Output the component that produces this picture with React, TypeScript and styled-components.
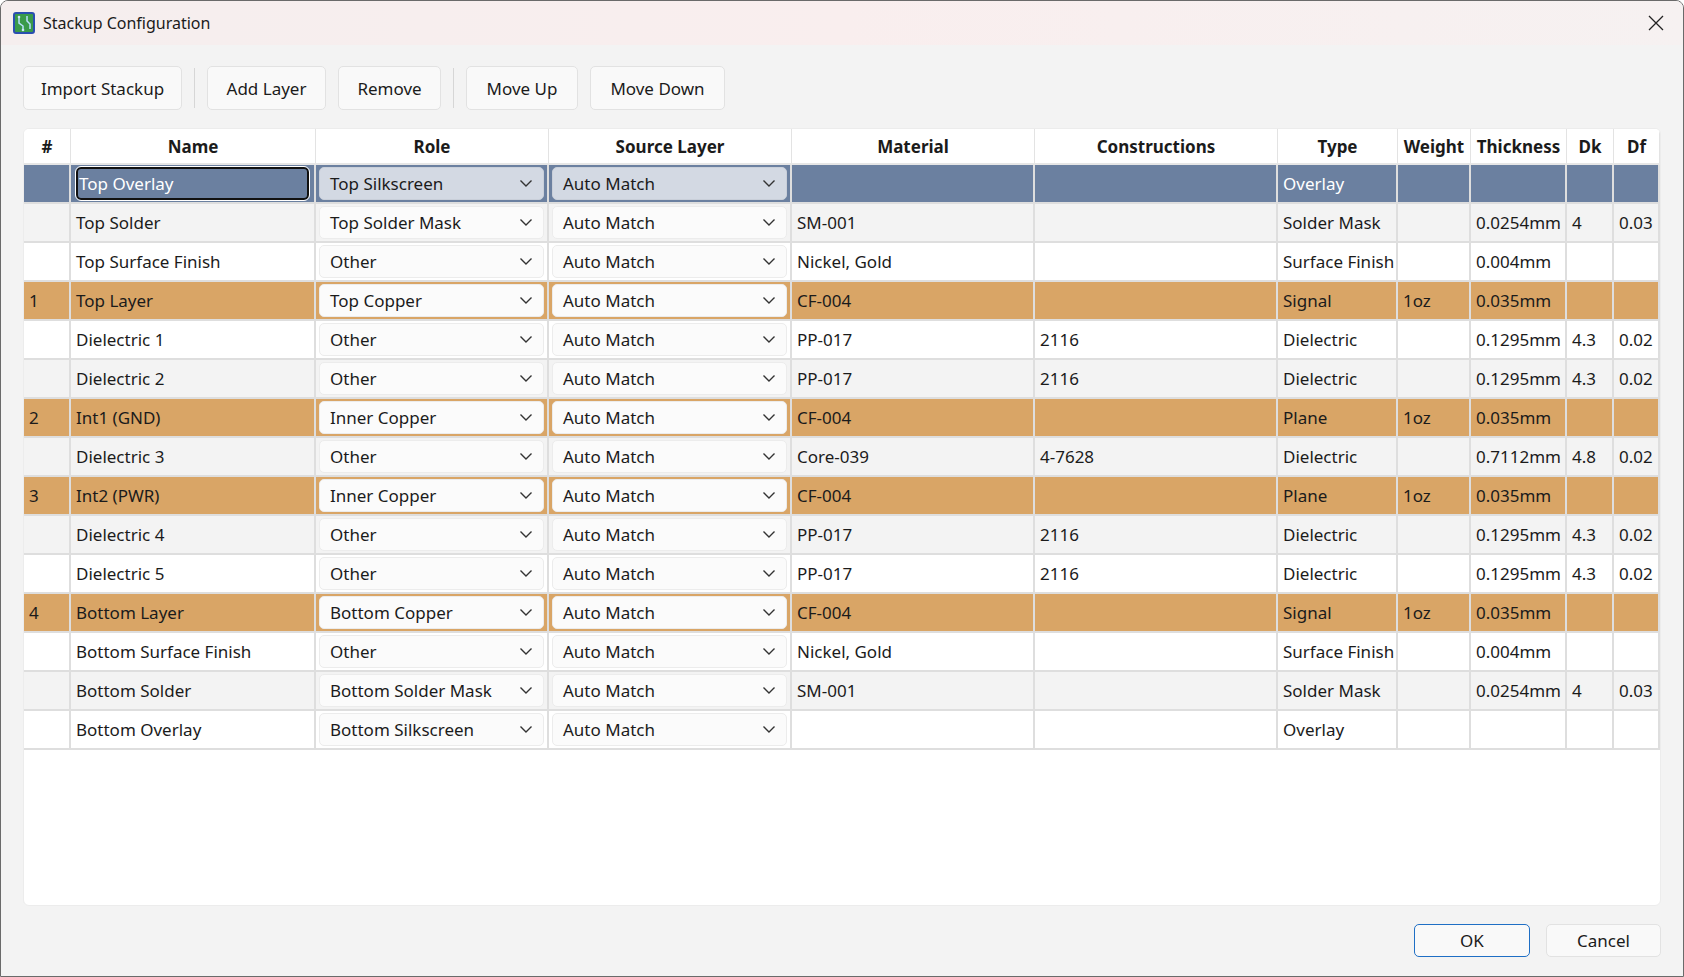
import React from "react";
import styled, { createGlobalStyle } from "styled-components";

const Global = createGlobalStyle`
  html, body { margin: 0; padding: 0; }
  body { font-family: "Noto Sans", "Open Sans", sans-serif; font-size: 16px; color: #1b1b1b; }
`;

const Window = styled.div`
  width: 1684px; height: 977px; box-sizing: border-box;
  border: 1px solid #6a6a6a; border-radius: 8px 8px 0 0; overflow: hidden;
  background: #f3f3f3; display: flex; flex-direction: column;
`;
const TitleBar = styled.div`
  height: 44px; display: flex; align-items: center; padding: 0 12px;
  background: linear-gradient(90deg, #f5eeee, #f9eeee 50%, #f6f1f1);
  font-size: 16px; gap: 8px;
`;
const Title = styled.div` flex: 1; `;
const Close = styled.div` width: 30px; display: flex; justify-content: center; `;
const Body = styled.div`
  flex: 1; display: flex; flex-direction: column; padding: 21px 22px 19px 22px; gap: 18px;
`;
const Toolbar = styled.div` display: flex; align-items: center; gap: 12px; height: 44px; `;
const Btn = styled.button<{ $w: number; $primary?: boolean; $small?: boolean }>`
  width: ${p => p.$w}px; height: ${p => (p.$small ? 33 : 44)}px;
  font-family: inherit; font-size: 17px; color: #1b1b1b;
  background: #f9f9f9; border: 1px solid ${p => (p.$primary ? "#1f6fc5" : "#e2e2e2")};
  border-radius: 5px;
`;
const Sep = styled.div` width: 1px; height: 40px; background: #d6d6d6; `;
const Table = styled.div`
  flex: 1; background: #fff; border-radius: 6px; border: 1px solid #ececec;
  display: flex; flex-direction: column; overflow: hidden;
`;
const cols = "47px 245px 233px 243px 243px 243px 120px 73px 96px 47px 1fr";
const Row = styled.div<{ $bg: string }>`
  display: grid; grid-template-columns: ${cols}; height: 39px;
  background: ${p => p.$bg}; border-bottom: 2px solid #dedede; box-sizing: border-box;
`;
const HeadRow = styled.div`
  display: grid; grid-template-columns: ${cols}; height: 36px; background: #fff;
  border-bottom: 2px solid #e6e6e6; box-sizing: border-box;
`;
const Head = styled.div`
  font-weight: 700; font-size: 17px; display: flex; align-items: center; justify-content: center;
  border-right: 1px solid #e3e3e3; white-space: nowrap;
`;
const Cell = styled.div<{ $fg?: string }>`
  display: flex; align-items: center; padding: 0 5px; font-size: 17px; white-space: nowrap;
  border-right: 2px solid #dedede; color: ${p => p.$fg || "#1b1b1b"}; overflow: hidden;
`;
const ComboCell = styled.div` display: flex; align-items: center; padding: 0 3px; border-right: 2px solid #dedede; `;
const Combo = styled.div<{ $sel?: boolean }>`
  flex: 1; height: 33px; box-sizing: border-box; border-radius: 5px;
  background: ${p => (p.$sel ? "#d3d9e3" : "#fbfbfb")}; border: 1px solid ${p => (p.$sel ? "#c9cfd9" : "#ececec")};
  display: flex; align-items: center; justify-content: space-between; padding: 0 10px; font-size: 17px;
`;
const Edit = styled.div`
  flex: 1; height: 33px; margin: 0 2px; box-sizing: border-box; border: 2px solid #111; outline: 1px solid #fff;
  border-radius: 5px; color: #fff; display: flex; align-items: center; padding-left: 1px; font-size: 17px;
`;
const Footer = styled.div` display: flex; justify-content: flex-end; gap: 16px; `;

const Chevron = () => (
  <svg width="14" height="9" viewBox="0 0 14 9"><path d="M1.5 1.5 7 7l5.5-5.5" fill="none" stroke="#333" strokeWidth="1.4" /></svg>
);

type R = [string, string, string, string, string, string, string, string, string, string, string];
const rows: R[] = [
  ["", "Top Overlay", "Top Silkscreen", "", "", "Overlay", "", "", "", "", "sel"],
  ["", "Top Solder", "Top Solder Mask", "SM-001", "", "Solder Mask", "", "0.0254mm", "4", "0.03", ""],
  ["", "Top Surface Finish", "Other", "Nickel, Gold", "", "Surface Finish", "", "0.004mm", "", "", ""],
  ["1", "Top Layer", "Top Copper", "CF-004", "", "Signal", "1oz", "0.035mm", "", "", "cu"],
  ["", "Dielectric 1", "Other", "PP-017", "2116", "Dielectric", "", "0.1295mm", "4.3", "0.02", ""],
  ["", "Dielectric 2", "Other", "PP-017", "2116", "Dielectric", "", "0.1295mm", "4.3", "0.02", ""],
  ["2", "Int1 (GND)", "Inner Copper", "CF-004", "", "Plane", "1oz", "0.035mm", "", "", "cu"],
  ["", "Dielectric 3", "Other", "Core-039", "4-7628", "Dielectric", "", "0.7112mm", "4.8", "0.02", ""],
  ["3", "Int2 (PWR)", "Inner Copper", "CF-004", "", "Plane", "1oz", "0.035mm", "", "", "cu"],
  ["", "Dielectric 4", "Other", "PP-017", "2116", "Dielectric", "", "0.1295mm", "4.3", "0.02", ""],
  ["", "Dielectric 5", "Other", "PP-017", "2116", "Dielectric", "", "0.1295mm", "4.3", "0.02", ""],
  ["4", "Bottom Layer", "Bottom Copper", "CF-004", "", "Signal", "1oz", "0.035mm", "", "", "cu"],
  ["", "Bottom Surface Finish", "Other", "Nickel, Gold", "", "Surface Finish", "", "0.004mm", "", "", ""],
  ["", "Bottom Solder", "Bottom Solder Mask", "SM-001", "", "Solder Mask", "", "0.0254mm", "4", "0.03", ""],
  ["", "Bottom Overlay", "Bottom Silkscreen", "", "", "Overlay", "", "", "", "", ""],
];

const heads = ["#", "Name", "Role", "Source Layer", "Material", "Constructions", "Type", "Weight", "Thickness", "Dk", "Df"];

export default function App() {
  return (
    <>
      <Global />
      <Window>
        <TitleBar>
          <svg width="22" height="22" viewBox="0 0 22 22">
            <rect x="1" y="1" width="20" height="20" rx="2" fill="#3a9a4a" stroke="#2a4fb0" strokeWidth="2" />
            <path d="M6 5v6l4 3v4M14 4v5l3 3v5" stroke="#b8e0ff" strokeWidth="1.5" fill="none" />
            <circle cx="6" cy="5" r="1.3" fill="#cfe8ff" /><circle cx="10" cy="18" r="1.3" fill="#cfe8ff" />
          </svg>
          <Title>Stackup Configuration</Title>
          <Close>
            <svg width="16" height="16" viewBox="0 0 16 16"><path d="M1 1l14 14M15 1 1 15" stroke="#222" strokeWidth="1.3" /></svg>
          </Close>
        </TitleBar>
        <Body>
          <Toolbar>
            <Btn $w={159}>Import Stackup</Btn>
            <Sep />
            <Btn $w={119}>Add Layer</Btn>
            <Btn $w={103}>Remove</Btn>
            <Sep />
            <Btn $w={112}>Move Up</Btn>
            <Btn $w={135}>Move Down</Btn>
          </Toolbar>
          <Table>
            <HeadRow>{heads.map(h => <Head key={h}>{h}</Head>)}</HeadRow>
            {rows.map((r, i) => {
              const sel = r[10] === "sel";
              const cu = r[10] === "cu";
              const bg = sel ? "#6b80a0" : cu ? "#d9a566" : i % 2 === 1 ? "#f3f3f3" : "#ffffff";
              const fg = sel ? "#ffffff" : "#1b1b1b";
              return (
                <Row key={i} $bg={bg}>
                  <Cell $fg={fg}>{r[0]}</Cell>
                  {sel ? <ComboCell><Edit>{r[1]}</Edit></ComboCell> : <Cell $fg={fg}>{r[1]}</Cell>}
                  <ComboCell><Combo $sel={sel}>{r[2]}<Chevron /></Combo></ComboCell>
                  <ComboCell><Combo $sel={sel}>Auto Match<Chevron /></Combo></ComboCell>
                  {r.slice(3, 10).map((v, j) => <Cell key={j} $fg={fg}>{v}</Cell>)}
                </Row>
              );
            })}
          </Table>
          <Footer>
            <Btn $w={116} $primary $small>OK</Btn>
            <Btn $w={115} $small>Cancel</Btn>
          </Footer>
        </Body>
      </Window>
    </>
  );
}
